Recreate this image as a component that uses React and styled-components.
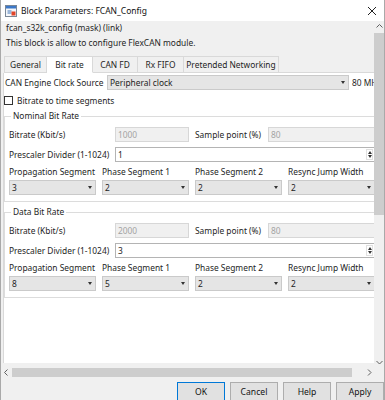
import React from 'react'
import styled, { createGlobalStyle } from 'styled-components'

const GlobalStyle = createGlobalStyle`
  html, body {
    margin: 0;
    padding: 0;
    background: #ffffff;
  }
  body {
    font-family: "Noto Sans", "DejaVu Sans", sans-serif;
    font-size: 8.4px;
    color: #1e1e1e;
  }
`;

const Window = styled.div`
    width: 385px;
    height: 400px;
    box-sizing: border-box;
    border-left: 1px solid #a9a9a9;
    border-right: 1px solid #a9a9a9;
    background: #f0f0f0;
    display: flex;
    flex-direction: column;
    overflow: hidden;
`;

const TitleBar = styled.div`
    height: 21px;
    flex: none;
    background: #ffffff;
    display: flex;
    align-items: center;
    padding-left: 4px;
`;

const TitleText = styled.span`
    flex: 1;
    margin-left: 4px;
    font-size: 8.5px;
    color: #111;
`;

const CloseBox = styled.div`
    width: 24px;
    display: flex;
    justify-content: center;
`;

const ScrollArea = styled.div`
    flex: none;
    display: grid;
    grid-template-columns: 1fr 10px;
    grid-template-rows: 346px 10px;
`;

const Viewport = styled.div`
    overflow: hidden;
`;

const MaskTitle = styled.div`
    padding-left: 5px;
    height: 13px;
    line-height: 13px;
`;

const Description = styled.div`
    padding-left: 5px;
    margin-top: 2px;
    height: 14px;
    line-height: 14px;
`;

const TabStrip = styled.div`
    display: flex;
    margin-top: 6px;
    padding-left: 3px;
    width: 400px;
`;

const Tab = styled.div`
    width: ${p => p.$w}px;
    height: 17px;
    box-sizing: border-box;
    display: flex;
    align-items: center;
    justify-content: center;
    white-space: nowrap;
    border: 1px solid #d9d9d9;
    border-left-width: ${p => (p.$first ? 1 : 0)}px;
    border-bottom-color: ${p => (p.$active ? 'transparent' : '#d9d9d9')};
    background: ${p => (p.$active ? '#ffffff' : '#f0f0f0')};
`;

const TabFiller = styled.div`
    flex: 1;
    border-bottom: 1px solid #d9d9d9;
`;

const Panel = styled.div`
    width: 400px;
    height: 290px;
    margin-left: 2px;
    border-left: 1px solid #d9d9d9;
    background: #ffffff;
    padding-top: 2px;
    box-sizing: border-box;
`;

const Row = styled.div`
    display: flex;
    align-items: center;
    height: 15px;
    white-space: nowrap;
    margin-top: ${p => p.$top || 0}px;
    padding-left: ${p => p.$indent || 0}px;
`;

const Label = styled.span`
    width: ${p => (p.$w ? `${p.$w}px` : 'auto')};
    flex: none;
    margin-left: ${p => p.$ml || 0}px;
    white-space: nowrap;
`;

const Select = styled.div`
    width: ${p => p.$w}px;
    height: 15px;
    box-sizing: border-box;
    flex: none;
    display: flex;
    align-items: center;
    justify-content: space-between;
    padding: 0 3px 0 2px;
    background: #e5e5e5;
    border: 1px solid #cacaca;
`;

const Caret = styled.span`
    width: 0;
    height: 0;
    border-left: 2.5px solid transparent;
    border-right: 2.5px solid transparent;
    border-top: 3px solid #333;
`;

const CaretUp = styled(Caret)`
    border-top: none;
    border-bottom: 3px solid #333;
`;

const Unit = styled.span`
    margin-left: 3px;
`;

const CheckRow = styled.label`
    display: flex;
    align-items: center;
    height: 14px;
    margin-top: 3px;
    gap: 4px;
`;

const CheckBox = styled.span`
    width: 9px;
    height: 9px;
    box-sizing: border-box;
    border: 1px solid #333;
    background: #fff;
`;

const Group = styled.fieldset`
    margin: ${p => p.$top}px 0 0 0;
    width: 366px;
    padding: 4px 4px 6px 4px;
    border: 1px solid #dcdcdc;
`;

const Legend = styled.legend`
    margin-left: 2px;
    padding: 0 2px;
    line-height: 14px;
    color: #1e1e1e;
`;

const DisabledInput = styled.div`
    width: ${p => (p.$w ? `${p.$w}px` : 'auto')};
    flex: ${p => (p.$w ? 'none' : 1)};
    height: 15px;
    box-sizing: border-box;
    padding-left: 2px;
    display: flex;
    align-items: center;
    background: #f0f0f0;
    border: 1px solid #d7d7d7;
    color: #a3a3a3;
`;

const SpinBox = styled.div`
    flex: 1;
    height: 15px;
    box-sizing: border-box;
    display: flex;
    align-items: center;
    justify-content: space-between;
    padding: 0 1px 0 2px;
    background: #ffffff;
    border: 1px solid #b4b4b4;
`;

const SpinButtons = styled.div`
    width: 7px;
    height: 11px;
    display: flex;
    flex-direction: column;
    align-items: center;
    justify-content: space-around;
    border: 1px solid #e0e0e0;
    box-sizing: border-box;
`;

const SegmentGrid = styled.div`
    display: grid;
    grid-template-columns: repeat(4, 87px);
    grid-template-rows: 14px 15px;
    column-gap: 6px;
    row-gap: 1px;
    margin-top: 3px;
    line-height: 14px;
    white-space: nowrap;
`;

const VScroll = styled.div`
    display: flex;
    flex-direction: column;
    background: #f0f0f0;
`;

const HScroll = styled.div`
    display: flex;
    align-items: center;
    background: #f0f0f0;
`;

const Arrow = styled.div`
    width: 10px;
    height: 10px;
    flex: none;
    display: flex;
    align-items: center;
    justify-content: center;
    margin-top: ${p => (p.$end ? 'auto' : 0)};
    margin-left: ${p => (p.$push ? 'auto' : 0)};
`;

const VThumb = styled.div`
    margin-top: 2px;
    height: 182px;
    background: #cdcdcd;
`;

const HThumb = styled.div`
    margin-left: 1px;
    width: 340px;
    height: 9px;
    background: #cdcdcd;
`;

const Corner = styled.div`
    background: #f0f0f0;
`;

const ButtonBar = styled.div`
    flex: 1;
    display: flex;
    justify-content: flex-end;
    align-items: flex-start;
    gap: 5px;
    padding: 5px 0 0 0;
`;

const Button = styled.button`
    width: 48px;
    height: 19px;
    box-sizing: border-box;
    padding: 0;
    font-family: inherit;
    font-size: 8.6px;
    color: #111;
    background: #e1e1e1;
    border: 1px solid ${p => (p.$primary ? '#0078d7' : '#adadad')};
`;

const Chevron = ({ dir }) => {
    const paths = {
        up: 'M1.5 5.5 L4.5 2.5 L7.5 5.5',
        down: 'M1.5 3 L4.5 6 L7.5 3',
        left: 'M5.5 1.5 L2.5 4.5 L5.5 7.5',
        right: 'M3 1.5 L6 4.5 L3 7.5',
    };
    return (
        <svg width="9" height="9" viewBox="0 0 9 9">
            <path d={paths[dir]} fill="none" stroke="#606060" strokeWidth="1" />
        </svg>
    );
};

const BlockIcon = () => (
    <svg width="12" height="12" viewBox="0 0 12 12">
        <rect x="0.5" y="0.5" width="11" height="11" fill="#f4f7fb" stroke="#7a8797" />
        <rect x="1" y="1" width="10" height="2.5" fill="#3c78c8" />
        <rect x="2.5" y="5" width="4" height="4" fill="#9bb6d8" />
        <rect x="6.5" y="6.5" width="4" height="4" fill="#e0442a" />
    </svg>
);

const CloseIcon = () => (
    <svg width="10" height="10" viewBox="0 0 10 10">
        <path d="M1 1 L9 9 M9 1 L1 9" stroke="#222" strokeWidth="1" />
    </svg>
);

const tabs = [
    { name: 'General', w: 43 },
    { name: 'Bit rate', w: 46, active: true },
    { name: 'CAN FD', w: 45 },
    { name: 'Rx FIFO', w: 46 },
    { name: 'Pretended Networking', w: 95 },
];

const segmentLabels = ['Propagation Segment', 'Phase Segment 1', 'Phase Segment 2', 'Resync Jump Width'];

const BitRateGroup = ({ title, top, bitrate, prescaler, segments }) => (
    <Group $top={top}>
        <Legend>{title}</Legend>
        <Row>
            <Label $w={106}>Bitrate (Kbit/s)</Label>
            <DisabledInput $w={74}>{bitrate}</DisabledInput>
            <Label $w={73} $ml={6}>Sample point (%)</Label>
            <DisabledInput>80</DisabledInput>
        </Row>
        <Row $top={5}>
            <Label $w={106}>Prescaler Divider (1-1024)</Label>
            <SpinBox>
                <span>{prescaler}</span>
                <SpinButtons>
                    <CaretUp />
                    <Caret />
                </SpinButtons>
            </SpinBox>
        </Row>
        <SegmentGrid>
            {segmentLabels.map(l => <span key={l}>{l}</span>)}
            {segments.map((v, i) => (
                <Select key={i} $w={87}>
                    <span>{v}</span>
                    <Caret />
                </Select>
            ))}
        </SegmentGrid>
    </Group>
);

const App = () => {
    return (
        <>
            <GlobalStyle />
            <Window>
                <TitleBar>
                    <BlockIcon />
                    <TitleText>Block Parameters: FCAN_Config</TitleText>
                    <CloseBox><CloseIcon /></CloseBox>
                </TitleBar>
                <ScrollArea>
                    <Viewport>
                        <MaskTitle>fcan_s32k_config (mask) (link)</MaskTitle>
                        <Description>This block is allow to configure FlexCAN module.</Description>
                        <TabStrip>
                            {tabs.map((t, i) => (
                                <Tab key={t.name} $w={t.w} $active={t.active} $first={i === 0}>{t.name}</Tab>
                            ))}
                            <TabFiller />
                        </TabStrip>
                        <Panel>
                            <Row $indent={1}>
                                <Label $w={102}>CAN Engine Clock Source</Label>
                                <Select $w={242}>
                                    <span>Peripheral clock</span>
                                    <Caret />
                                </Select>
                                <Unit>80 MHz</Unit>
                            </Row>
                            <CheckRow>
                                <CheckBox />
                                <span>Bitrate to time segments</span>
                            </CheckRow>
                            <BitRateGroup title="Nominal Bit Rate" top={2} bitrate="1000" prescaler="1" segments={['3', '2', '2', '2']} />
                            <BitRateGroup title="Data Bit Rate" top={3} bitrate="2000" prescaler="3" segments={['8', '5', '2', '2']} />
                        </Panel>
                    </Viewport>
                    <VScroll>
                        <Arrow><Chevron dir="up" /></Arrow>
                        <VThumb />
                        <Arrow $end><Chevron dir="down" /></Arrow>
                    </VScroll>
                    <HScroll>
                        <Arrow><Chevron dir="left" /></Arrow>
                        <HThumb />
                        <Arrow $push><Chevron dir="right" /></Arrow>
                    </HScroll>
                    <Corner />
                </ScrollArea>
                <ButtonBar>
                    <Button $primary>OK</Button>
                    <Button>Cancel</Button>
                    <Button>Help</Button>
                    <Button>Apply</Button>
                </ButtonBar>
            </Window>
        </>
    );
};

export default App;
